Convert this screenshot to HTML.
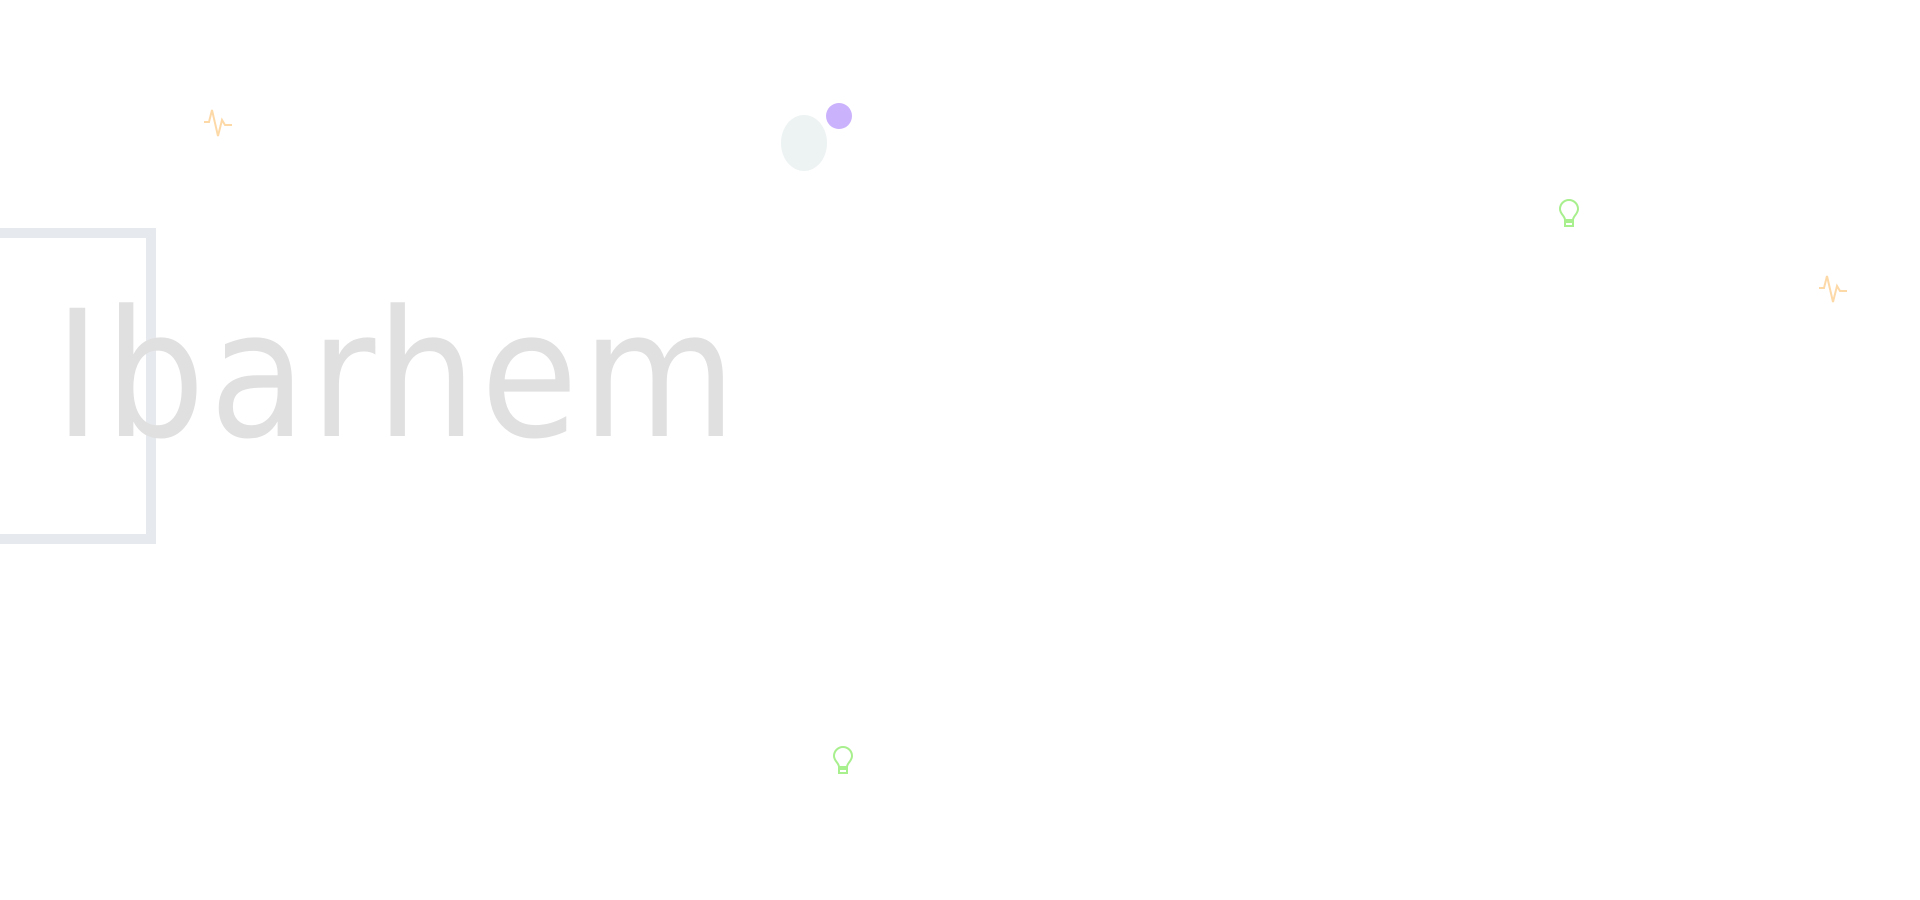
<!DOCTYPE html>
<html><head><style>
html,body{margin:0;padding:0;width:1920px;height:900px;background:#fff;overflow:hidden;position:relative;font-family:"Liberation Sans",sans-serif}
.box{position:absolute;left:-10px;top:228px;width:146px;height:296px;border:10px solid #e6e9ee}
.t{position:absolute;left:54px;top:276px;font-family:"DejaVu Sans Condensed","DejaVu Sans",sans-serif;font-stretch:condensed;font-size:176px;line-height:200px;letter-spacing:4px;color:#e0e0e0;white-space:nowrap}
svg{position:absolute}
</style></head><body>
<div class="box"></div>
<div class="t">Ibarhem</div>
<svg style="left:203px;top:108px" width="32" height="30" viewBox="0 0 32 30"><path d="M1 14h5l3-12 6 26 4-16 3 5h7" fill="none" stroke="#fdd9a8" stroke-width="2"/></svg>
<svg style="left:1818px;top:274px" width="32" height="30" viewBox="0 0 32 30"><path d="M1 14h5l3-12 6 26 4-16 3 5h7" fill="none" stroke="#fdd9a8" stroke-width="2"/></svg>
<svg style="left:780px;top:100px" width="80" height="80"><ellipse cx="24" cy="43" rx="23" ry="28" fill="#edf2f2"/><circle cx="59" cy="16" r="13" fill="#cbb2fc"/></svg>
<svg style="left:1557px;top:196px" width="24" height="34" viewBox="0 0 24 34"><path d="M8 24c0-4-5-6-5-11a9 9 0 0 1 18 0c0 5-5 7-5 11zM8 26h8v4H8z" fill="none" stroke="#a8ef8e" stroke-width="2"/></svg>
<svg style="left:831px;top:743px" width="24" height="34" viewBox="0 0 24 34"><path d="M8 24c0-4-5-6-5-11a9 9 0 0 1 18 0c0 5-5 7-5 11zM8 26h8v4H8z" fill="none" stroke="#a8ef8e" stroke-width="2"/></svg>
</body></html>
